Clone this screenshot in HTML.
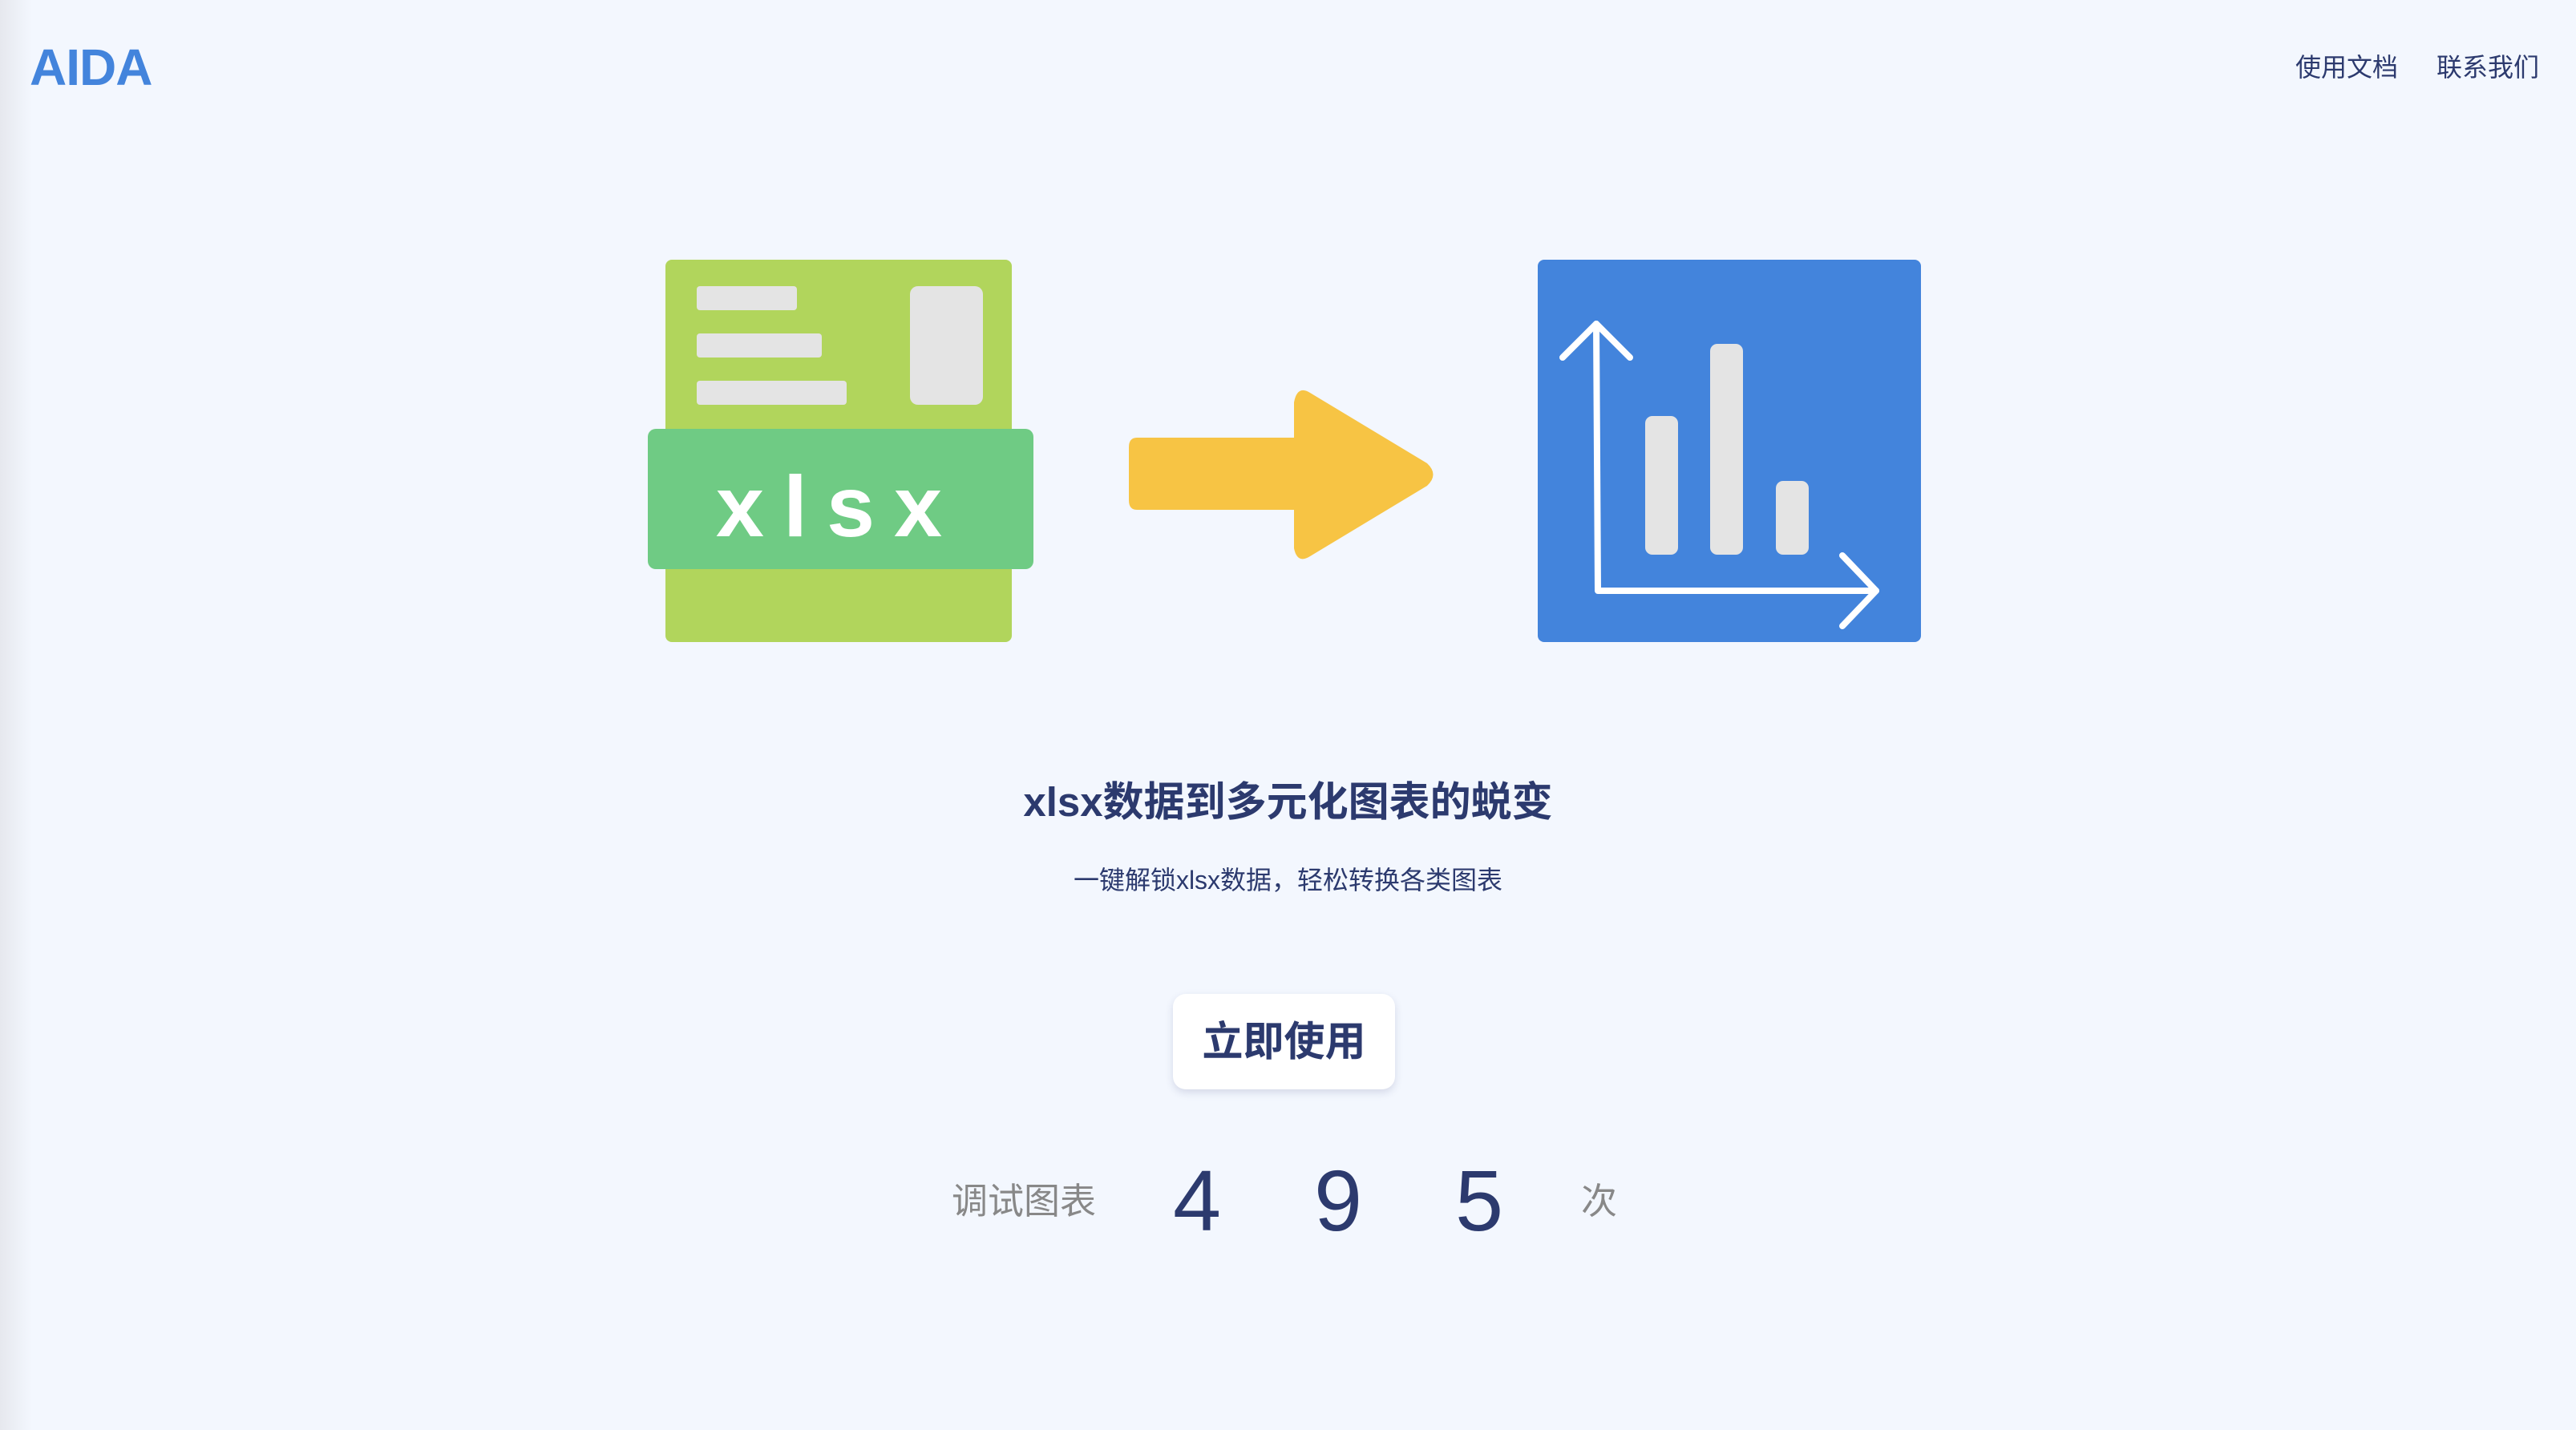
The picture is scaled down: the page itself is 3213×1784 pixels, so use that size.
<!DOCTYPE html>
<html><head><meta charset="utf-8">
<style>
html,body{margin:0;padding:0}
body{width:3213px;height:1784px;position:relative;overflow:hidden;background:#f3f7fe;font-family:"Liberation Sans","Noto Sans CJK SC",sans-serif}
.shade{position:absolute;left:0;top:0;width:40px;height:1784px;background:linear-gradient(to right,#e6e8ee,#f3f7fe)}
.t{position:absolute;white-space:nowrap;line-height:1}
</style></head><body>
<div class="shade"></div>
<div class="t" style="left:37px;top:52px;font-size:64px;font-weight:bold;color:#4384dc;letter-spacing:-1px">AIDA</div>
<div class="t" style="left:2863px;top:68px;font-size:32px;color:#2c3a6e">使用文档</div>
<div class="t" style="left:3039px;top:68px;font-size:32px;color:#2c3a6e">联系我们</div>

<svg style="position:absolute;left:0;top:0" width="3213" height="1784" viewBox="0 0 3213 1784">
  <rect x="830" y="324" width="432" height="477" rx="8" fill="#b1d55c"/>
  <rect x="869" y="357" width="125" height="30" rx="4" fill="#e4e4e4"/>
  <rect x="869" y="416" width="156" height="30" rx="4" fill="#e4e4e4"/>
  <rect x="869" y="475" width="187" height="30" rx="4" fill="#e4e4e4"/>
  <rect x="1135" y="357" width="91" height="148" rx="10" fill="#e4e4e4"/>
  <rect x="808" y="535" width="481" height="175" rx="10" fill="#6fcb84"/>
  <text x="1046" y="669" text-anchor="middle" font-family="Liberation Sans, sans-serif" font-size="108" font-weight="bold" fill="#fff" letter-spacing="24">xlsx</text>
  <path d="M1418 546 H1614 V502 Q1618 480 1634 490 L1780 578 Q1795 592 1780 606 L1634 694 Q1618 704 1614 684 V636 H1418 Q1408 636 1408 624 V558 Q1408 546 1418 546 Z" fill="#f7c444"/>
  <rect x="1918" y="324" width="478" height="477" rx="8" fill="#4384dc"/>
  <rect x="2052" y="519" width="41" height="173" rx="9" fill="#e4e4e4"/>
  <rect x="2133" y="429" width="41" height="263" rx="9" fill="#e4e4e4"/>
  <rect x="2215" y="600" width="41" height="92" rx="9" fill="#e4e4e4"/>
  <g stroke="#fff" stroke-width="8" fill="none" stroke-linecap="round" stroke-linejoin="round">
    <path d="M1991 404 L1993 737 H2340"/>
    <path d="M1949 446 L1991 404 L2033 446"/>
    <path d="M2298 693 L2340 737 L2298 781"/>
  </g>
</svg>

<div class="t" style="left:0;width:3213px;text-align:center;top:975px;font-size:51px;font-weight:bold;color:#2c3a6e">xlsx数据到多元化图表的蜕变</div>
<div class="t" style="left:0;width:3213px;text-align:center;top:1082px;font-size:32px;color:#2c3a6e">一键解锁xlsx数据，轻松转换各类图表</div>

<div style="position:absolute;left:1463px;top:1240px;width:277px;height:119px;background:#fff;border-radius:16px;box-shadow:0 4px 10px rgba(40,50,110,0.15);text-align:center;line-height:119px;font-size:51px;font-weight:bold;color:#2c3a6e">立即使用</div>

<div class="t" style="left:1187px;top:1476px;font-size:45px;color:#888">调试图表</div>
<div class="t" style="left:1463px;top:1444px;font-size:108px;color:#2c3a6e">4</div>
<div class="t" style="left:1639px;top:1444px;font-size:108px;color:#2c3a6e">9</div>
<div class="t" style="left:1815px;top:1444px;font-size:108px;color:#2c3a6e">5</div>
<div class="t" style="left:1972px;top:1476px;font-size:45px;color:#888">次</div>
</body></html>
